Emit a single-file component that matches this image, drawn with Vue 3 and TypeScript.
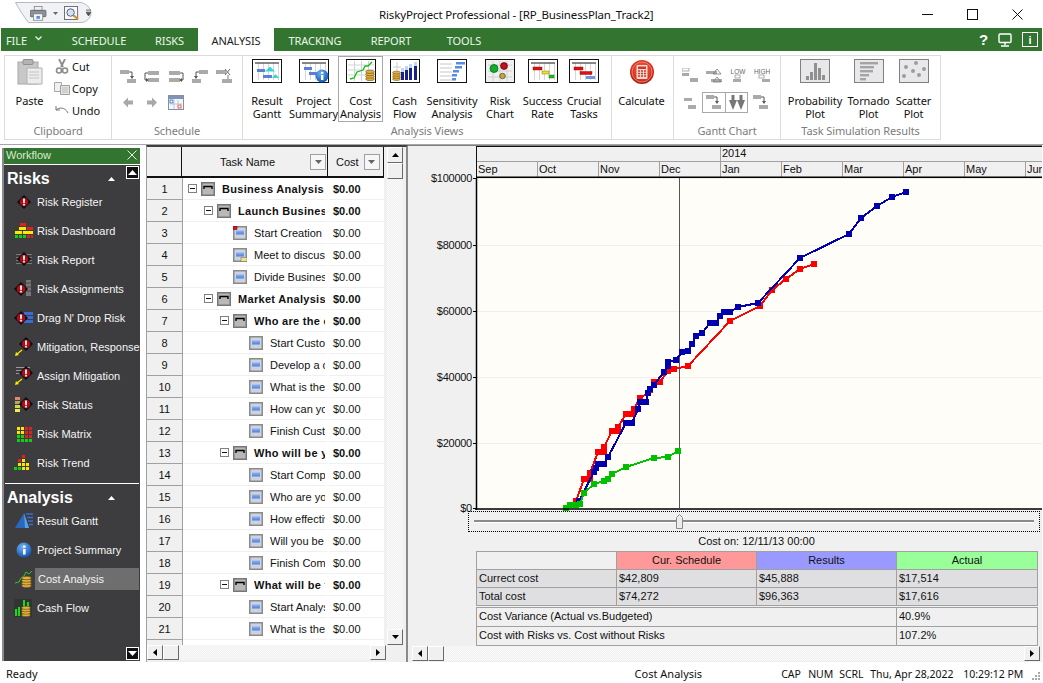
<script setup lang="ts">
type Pt = [number, number]

const tabs = [
  { label: 'SCHEDULE', w: 84 },
  { label: 'RISKS', w: 57 },
  { label: 'ANALYSIS', w: 76, active: true },
  { label: 'TRACKING', w: 82 },
  { label: 'REPORT', w: 70 },
  { label: 'TOOLS', w: 76 },
]

const analysisBtns = [
  { id: 'b-result', l1: 'Result', l2: 'Gantt', w: 46 },
  { id: 'b-summary', l1: 'Project', l2: 'Summary', w: 47 },
  { id: 'b-cost', l1: 'Cost', l2: 'Analysis', w: 45, sel: true },
  { id: 'b-cash', l1: 'Cash', l2: 'Flow', w: 43 },
  { id: 'b-sens', l1: 'Sensitivity', l2: 'Analysis', w: 52 },
  { id: 'b-riskc', l1: 'Risk', l2: 'Chart', w: 44 },
  { id: 'b-success', l1: 'Success', l2: 'Rate', w: 41 },
  { id: 'b-crucial', l1: 'Crucial', l2: 'Tasks', w: 42 },
]

const simBtns = [
  { id: 'b-prob', l1: 'Probability', l2: 'Plot', w: 62 },
  { id: 'b-torn', l1: 'Tornado', l2: 'Plot', w: 45 },
  { id: 'b-scat', l1: 'Scatter', l2: 'Plot', w: 45 },
]

const riskItems = [
  { icon: 'w-register', label: 'Risk Register' },
  { icon: 'w-dash', label: 'Risk Dashboard' },
  { icon: 'w-report', label: 'Risk Report' },
  { icon: 'w-assign', label: 'Risk Assignments' },
  { icon: 'w-drag', label: "Drag N' Drop Risk" },
  { icon: 'w-mitig', label: 'Mitigation, Response' },
  { icon: 'w-amitig', label: 'Assign Mitigation' },
  { icon: 'w-status', label: 'Risk Status' },
  { icon: 'w-matrix', label: 'Risk Matrix' },
  { icon: 'w-trend', label: 'Risk Trend' },
]

const analysisItems = [
  { icon: 'w-gantt', label: 'Result Gantt' },
  { icon: 'w-info', label: 'Project Summary' },
  { icon: 'w-cost', label: 'Cost Analysis', active: true },
  { icon: 'w-cash', label: 'Cash Flow' },
]

// level, summary row?, icon, name
const rows: { lv: number; sum?: boolean; icon?: string; name: string }[] = [
  { lv: 0, sum: true, name: 'Business Analysis' },
  { lv: 1, sum: true, name: 'Launch Business Plan' },
  { lv: 2, icon: 't-red', name: 'Start Creation of Plan' },
  { lv: 2, icon: 't-note', name: 'Meet to discuss the plan' },
  { lv: 2, name: 'Divide Business Plan' },
  { lv: 1, sum: true, name: 'Market Analysis Phase' },
  { lv: 2, sum: true, name: 'Who are the customers' },
  { lv: 3, name: 'Start Customer Study' },
  { lv: 3, name: 'Develop a customer' },
  { lv: 3, name: 'What is the market' },
  { lv: 3, name: 'How can you reach' },
  { lv: 3, name: 'Finish Customer Study' },
  { lv: 2, sum: true, name: 'Who will be your rivals' },
  { lv: 3, name: 'Start Competition' },
  { lv: 3, name: 'Who are your rivals' },
  { lv: 3, name: 'How effective are they' },
  { lv: 3, name: 'Will you be able' },
  { lv: 3, name: 'Finish Competition' },
  { lv: 2, sum: true, name: 'What will be the price' },
  { lv: 3, name: 'Start Analysis' },
  { lv: 3, name: 'What is the price' },
]

const months = ['Sep', 'Oct', 'Nov', 'Dec', 'Jan', 'Feb', 'Mar', 'Apr', 'May', 'Jun']

const yTicks = [
  { y: 178, label: '$100000' },
  { y: 245, label: '$80000' },
  { y: 311, label: '$60000' },
  { y: 377, label: '$40000' },
  { y: 443, label: '$20000' },
  { y: 508, label: '$0' },
]

const red: Pt[] = [[576,501],[584,479],[590,479],[590,473],[598,452],[604,452],[604,447],[612,431],[618,431],[618,427],[626,414],[632,414],[634,409],[640,398],[648,393],[650,390],[654,382],[660,382],[668,371],[674,369],[688,366],[730,321],[760,306],[772,290],[786,279],[800,269],[814,264]]
const blue: Pt[] = [[579,501],[594,472],[596,468],[598,464],[604,464],[608,457],[626,423],[632,423],[638,409],[640,402],[646,402],[648,393],[650,389],[654,385],[664,372],[668,366],[668,362],[676,360],[682,352],[688,351],[692,344],[696,336],[702,333],[710,323],[716,323],[720,316],[724,312],[730,312],[738,307],[758,303],[800,258],[849,234],[861,218],[877,206],[892,197],[906,192]]
const green: Pt[] = [[566,508],[570,505],[576,505],[580,504],[584,493],[594,484],[604,481],[608,479],[612,474],[626,467],[654,458],[668,457],[678,451]]

const series = [
  { color: '#ff0000', pts: red },
  { color: '#0000b0', pts: blue },
  { color: '#00c000', pts: green },
]

function line(pts: Pt[]) {
  return pts.map((p) => p.join(',')).join(' ')
}

const matrixCols = ['#ffe400', '#ffe400', '#e02020', '#e02020']
const matrixCells: { x: number; y: number; c: string }[] = []
for (let r = 0; r < 4; r++) {
  for (let c = 0; c < 4; c++) {
    let col = matrixCols[c]
    if (r === 3 || (r === 2 && c < 2)) col = '#10d010'
    if (r === 1 && c === 0) col = '#ffe400'
    matrixCells.push({ x: 3 + c * 4, y: 3 + r * 4, c: col })
  }
}
const trendCells = [
  [11, 2, '#e02020'], [11, 6, '#ffe400'], [7, 6, '#e02020'], [11, 10, '#ffe400'], [7, 10, '#ffe400'],
  [15, 10, '#ffe400'], [3, 14, '#10d010'], [7, 14, '#10d010'], [11, 14, '#ffe400'], [15, 14, '#ffe400'],
] as [number, number, string][]
</script>

<template>
  <div class="app">
    <svg class="defs" width="0" height="0">
      <defs>
        <linearGradient id="bluebar" x1="0" y1="0" x2="0" y2="1">
          <stop offset="0" stop-color="#8fb4f4" />
          <stop offset="1" stop-color="#4f7fe0" />
        </linearGradient>
        <radialGradient id="redball" cx="0.5" cy="0.4" r="0.6">
          <stop offset="0" stop-color="#f06a50" />
          <stop offset="0.75" stop-color="#d8301c" />
          <stop offset="1" stop-color="#9c1c10" />
        </radialGradient>
        <radialGradient id="blueball" cx="0.4" cy="0.3" r="0.75">
          <stop offset="0" stop-color="#6db2f2" />
          <stop offset="1" stop-color="#1050b0" />
        </radialGradient>

        <!-- coins -->
        <symbol id="coins" viewBox="0 0 10 12">
          <g fill="#e0b040" stroke="#6e5010" stroke-width="0.6">
            <ellipse cx="5" cy="10" rx="4.4" ry="1.6" />
            <ellipse cx="5" cy="7.6" rx="4.4" ry="1.6" />
            <ellipse cx="5" cy="5.2" rx="4.4" ry="1.6" />
            <ellipse cx="5" cy="2.8" rx="4.4" ry="1.6" />
          </g>
        </symbol>

        <!-- large ribbon views -->
        <symbol id="frame" viewBox="0 0 30 24">
          <rect x="0.5" y="0.5" width="29" height="23" fill="#fff" stroke="#111" />
          <path d="M6.5 4v17M11.5 4v17M16.5 4v17M21.5 4v17M26.5 4v17" stroke="#d6d6d6" />
          <path d="M3 4h24" stroke="#555" stroke-width="1.4" />
        </symbol>
        <symbol id="b-result" viewBox="0 0 30 24">
          <use href="#frame" width="30" height="24" />
          <rect x="5" y="10" width="8" height="3" fill="#5a80d8" />
          <rect x="11" y="16" width="9" height="3" fill="#5a80d8" />
          <path d="M13 12.5l5-5 5 5zM20 19l3.5-4 3.5 4z" fill="#35d6d6" />
        </symbol>
        <symbol id="b-summary" viewBox="0 0 30 24">
          <use href="#frame" width="30" height="24" />
          <rect x="5" y="8" width="8" height="3" fill="#5a80d8" />
          <rect x="10" y="13" width="8" height="3" fill="#5a80d8" />
          <circle cx="23" cy="17" r="6.5" fill="url(#blueball)" />
          <rect x="22" y="16" width="2.4" height="5" fill="#fff" />
          <rect x="22" y="12.8" width="2.4" height="2" fill="#fff" />
        </symbol>
        <symbol id="b-cost" viewBox="0 0 30 24">
          <rect x="0.5" y="0.5" width="29" height="23" fill="#fff" stroke="#111" />
          <path d="M2 6h26M2 11h26M2 16h26M8.5 2v20M15.5 2v20M22.5 2v20" stroke="#cfd3d8" />
          <path d="M4 20l4-1 3-6 6-2 2-4 3 0 4-4" fill="none" stroke="#10c010" stroke-width="1.3" />
          <use href="#coins" x="19" y="10" width="10" height="12" />
        </symbol>
        <symbol id="b-cash" viewBox="0 0 30 24">
          <rect x="0.5" y="0.5" width="29" height="23" fill="#fff" stroke="#111" />
          <path d="M3 8h8M3 14h8M7 3v18" stroke="#ccc" />
          <g fill="#bcd8f4">
            <rect x="11" y="9" width="3" height="4" /><rect x="15" y="7" width="3" height="4" /><rect x="19" y="5" width="3" height="4" /><rect x="24" y="3" width="3" height="4" />
          </g>
          <g fill="#18208c">
            <rect x="11" y="13" width="3" height="8" /><rect x="15" y="11" width="3" height="10" /><rect x="19" y="9" width="3" height="12" /><rect x="24" y="7" width="3" height="14" />
          </g>
          <use href="#coins" x="2" y="11" width="9" height="11" />
        </symbol>
        <symbol id="b-sens" viewBox="0 0 30 24">
          <rect x="0.5" y="0.5" width="29" height="23" fill="#fff" stroke="#111" />
          <path d="M3 5h12M3 9h12M3 13h12M3 17h12M3 21h12" stroke="#c8c8c8" />
          <g fill="#5a8be0">
            <rect x="19" y="3" width="9" height="2.5" /><rect x="18" y="7" width="7" height="2.5" />
            <rect x="16" y="11" width="6" height="2.5" /><rect x="15" y="15" width="5" height="2.5" /><rect x="15" y="19" width="4" height="2.5" />
          </g>
        </symbol>
        <symbol id="b-riskc" viewBox="0 0 30 24">
          <rect x="0.5" y="0.5" width="29" height="23" fill="#f0f0ee" stroke="#111" />
          <path d="M3 6h24M3 12h24M3 18h24M8 2v20M15 2v20M22 2v20" stroke="#d0d0d0" />
          <circle cx="9" cy="9.5" r="4" fill="#10b020" stroke="#064" stroke-width="0.8" />
          <circle cx="19" cy="7" r="3.4" fill="#c01020" stroke="#600" stroke-width="0.8" />
          <circle cx="17.5" cy="17" r="2.8" fill="#c0a828" stroke="#555" stroke-width="0.8" />
        </symbol>
        <symbol id="b-success" viewBox="0 0 30 24">
          <use href="#frame" width="30" height="24" />
          <rect x="5" y="8" width="9" height="3" fill="#e01010" stroke="#800" stroke-width="0.4" />
          <rect x="14" y="12" width="7" height="3" fill="#f0e020" stroke="#660" stroke-width="0.4" />
          <rect x="21" y="16" width="5" height="3" fill="#20c020" stroke="#060" stroke-width="0.4" />
        </symbol>
        <symbol id="b-crucial" viewBox="0 0 30 24">
          <use href="#frame" width="30" height="24" />
          <rect x="5" y="8" width="9" height="3" fill="#e01010" stroke="#800" stroke-width="0.4" />
          <rect x="11" y="12.5" width="12" height="3" fill="#e01010" stroke="#800" stroke-width="0.4" />
          <rect x="17" y="17" width="9" height="3" fill="#6a96e4" />
        </symbol>
        <symbol id="b-calc" viewBox="0 0 26 26">
          <circle cx="13" cy="13" r="12" fill="url(#redball)" />
          <circle cx="13" cy="13" r="10" fill="none" stroke="#f09080" stroke-width="0.8" />
          <rect x="7.5" y="6" width="11" height="14" rx="1" fill="#f6d8d0" />
          <rect x="9" y="7.5" width="8" height="2.5" fill="#c83a28" />
          <path d="M9 12h2M12 12h2M15 12h2M9 14.5h2M12 14.5h2M15 14.5h2M9 17h2M12 17h2M15 17h2" stroke="#c83a28" stroke-width="1.5" />
        </symbol>
        <symbol id="b-prob" viewBox="0 0 30 24">
          <rect x="0.5" y="0.5" width="29" height="23" fill="#e8e8ea" stroke="#808080" />
          <g fill="#909090">
            <rect x="6" y="17" width="3" height="4" /><rect x="10" y="13" width="3" height="8" />
            <rect x="14" y="4" width="3" height="17" /><rect x="18" y="9" width="3" height="12" /><rect x="22" y="16" width="3" height="5" />
          </g>
        </symbol>
        <symbol id="b-torn" viewBox="0 0 30 24">
          <rect x="0.5" y="0.5" width="29" height="23" fill="#e8e8ea" stroke="#808080" />
          <g fill="#a4a4a4">
            <rect x="6" y="3" width="18" height="2.4" /><rect x="6" y="7" width="14" height="2.4" />
            <rect x="6" y="11" width="13" height="2.4" /><rect x="6" y="15" width="9" height="2.4" /><rect x="6" y="19" width="6" height="2.4" />
          </g>
        </symbol>
        <symbol id="b-scat" viewBox="0 0 30 24">
          <rect x="0.5" y="0.5" width="29" height="23" fill="#e8e8ea" stroke="#808080" />
          <g fill="#9c9c9c">
            <circle cx="7" cy="8" r="2" /><circle cx="17" cy="4" r="2" /><circle cx="14" cy="12" r="2" />
            <circle cx="25" cy="10" r="2" /><circle cx="20" cy="16" r="2" /><circle cx="5" cy="17" r="2" />
          </g>
        </symbol>

        <!-- small grey ribbon icons -->
        <symbol id="s-l1" viewBox="0 0 16 15">
          <rect x="0" y="1" width="9" height="4" fill="#aaa" /><rect x="7" y="10" width="9" height="4" fill="#aaa" />
          <path d="M9 3h3v4" stroke="#555" fill="none" /><path d="M10 7h4l-2 3z" fill="#555" />
        </symbol>
        <symbol id="s-l2" viewBox="0 0 16 15">
          <rect x="4" y="2" width="11" height="4" fill="#aaa" /><rect x="4" y="9" width="11" height="4" fill="#aaa" />
          <path d="M4 4H1v7h1" stroke="#555" fill="none" /><path d="M2 9l3 2-3 2z" fill="#555" />
        </symbol>
        <symbol id="s-l3" viewBox="0 0 16 15">
          <rect x="1" y="2" width="11" height="4" fill="#aaa" /><rect x="1" y="9" width="11" height="4" fill="#aaa" />
          <path d="M12 4h3v7h-1" stroke="#555" fill="none" /><path d="M14 9l-3 2 3 2z" fill="#555" />
        </symbol>
        <symbol id="s-l4" viewBox="0 0 16 15">
          <rect x="7" y="1" width="9" height="4" fill="#aaa" /><rect x="0" y="10" width="9" height="4" fill="#aaa" />
          <path d="M7 3H4v4" stroke="#555" fill="none" /><path d="M2 7h4l-2 3z" fill="#555" />
        </symbol>
        <symbol id="s-l5" viewBox="0 0 16 15">
          <rect x="0" y="1" width="10" height="4" fill="#aaa" /><rect x="6" y="10" width="10" height="4" fill="#aaa" />
          <path d="M9 0l5 6M14 0L9 6" stroke="#666" /><path d="M12 6v4" stroke="#777" />
        </symbol>
        <symbol id="s-left" viewBox="0 0 16 15"><path d="M3 7.5l5-5v3h5v4H8v3z" fill="#a8a8a8" /></symbol>
        <symbol id="s-right" viewBox="0 0 16 15"><path d="M13 7.5l-5-5v3H3v4h5v3z" fill="#a8a8a8" /></symbol>
        <symbol id="s-cal" viewBox="0 0 16 15">
          <rect x="0.5" y="0.5" width="15" height="14" fill="#f4f6fa" stroke="#8090a8" />
          <rect x="1" y="1" width="14" height="3" fill="#7f93b4" />
          <rect x="2" y="5" width="3" height="3" fill="#fff" stroke="#2860d0" stroke-width="0.8" />
          <rect x="10" y="10" width="3" height="3" fill="#fff" stroke="#e04020" stroke-width="0.8" />
          <path d="M6 5v9M10 5v5M2 9h12" stroke="#b4bccc" stroke-width="0.8" />
        </symbol>
        <symbol id="s-g1" viewBox="0 0 16 15">
          <rect x="0" y="0" width="7" height="3" fill="#fff" stroke="#999" stroke-width="0.8" />
          <rect x="0" y="5" width="7" height="3" fill="#aaa" /><rect x="8" y="10" width="8" height="4" fill="#aaa" />
        </symbol>
        <symbol id="s-g2" viewBox="0 0 16 15">
          <rect x="0" y="3" width="11" height="3" fill="#aaa" /><rect x="5" y="11" width="11" height="3" fill="#aaa" />
          <path d="M7 6l4-5 4 5zM7 14l4-5 4 5z" fill="none" stroke="#777" stroke-width="0.8" />
        </symbol>
        <symbol id="s-g5" viewBox="0 0 16 15">
          <rect x="2" y="3" width="8" height="3" fill="#aaa" /><rect x="6" y="10" width="8" height="4" fill="#aaa" />
        </symbol>
        <symbol id="s-g6" viewBox="0 0 16 15">
          <rect x="0" y="0" width="8" height="4" fill="#aaa" /><rect x="6" y="10" width="9" height="4" fill="#aaa" />
          <path d="M8 2h3v4" stroke="#555" fill="none" /><path d="M9 6h4l-2 3z" fill="#555" />
        </symbol>
        <symbol id="s-arrows" viewBox="0 0 18 15">
          <path d="M1 5l4 10 4-10H6.5V0h-3v5z" fill="#777" /><path d="M9 5l4 10 4-10h-2.5V0h-3v5z" fill="#777" />
        </symbol>

        <!-- workflow icons -->
        <symbol id="diamond" viewBox="0 0 16 16">
          <path d="M8 0l8 8-8 8-8-8z" fill="#0c0c0c" />
          <circle cx="8" cy="8" r="5" fill="#a80e18" />
          <rect x="7" y="4" width="2" height="5" fill="#fff" /><rect x="7" y="10" width="2" height="2" fill="#fff" />
        </symbol>
        <symbol id="w-register" viewBox="0 0 20 20"><use href="#diamond" x="3" y="3" width="14" height="14" /></symbol>
        <symbol id="w-dash" viewBox="0 0 20 20">
          <g fill="#e02020"><rect x="6" y="2" width="6" height="3" /><rect x="13" y="6" width="6" height="3" /><rect x="13" y="14" width="3" height="3" /><rect x="17" y="14" width="2" height="3" /></g>
          <g fill="#ffe800"><rect x="5" y="6" width="7" height="3" /><rect x="1" y="10" width="7" height="3" /><rect x="9" y="10" width="10" height="3" /></g>
          <g fill="#10d010"><rect x="1" y="14" width="3" height="3" /><rect x="5" y="14" width="3" height="3" /><rect x="9" y="14" width="3" height="3" /></g>
        </symbol>
        <symbol id="w-report" viewBox="0 0 20 20">
          <path d="M2 4.500h16M2 7.500h16M2 10.500h16M2 13.500h16" stroke="#777" /><use href="#diamond" x="3" y="2" width="14" height="14" />
        </symbol>
        <symbol id="w-assign" viewBox="0 0 20 20">
          <rect x="12" y="1" width="5" height="16" fill="#777" /><path d="M12 4h5M12 8h5M12 12h5" stroke="#444" />
          <use href="#diamond" x="0" y="3" width="14" height="14" />
        </symbol>
        <symbol id="w-drag" viewBox="0 0 20 20">
          <g fill="#3a6cd8"><rect x="10" y="4" width="9" height="3" /><rect x="11" y="8" width="8" height="3" /><rect x="10" y="12" width="9" height="3" /></g>
          <use href="#diamond" x="0" y="3" width="14" height="14" />
        </symbol>
        <symbol id="w-mitig" viewBox="0 0 20 20">
          <use href="#diamond" x="5" y="0" width="14" height="14" />
          <path d="M8 13l-5 4" stroke="#ffe800" stroke-width="1.3" /><path d="M1 19l1-4 3 3z" fill="#ffe800" />
        </symbol>
        <symbol id="w-amitig" viewBox="0 0 20 20">
          <path d="M2 1.500h14M2 4.500h14M2 7.500h14" stroke="#999" />
          <use href="#diamond" x="5" y="0" width="14" height="14" />
          <path d="M8 13l-5 4" stroke="#ffe800" stroke-width="1.3" /><path d="M1 19l1-4 3 3z" fill="#ffe800" />
        </symbol>
        <symbol id="w-status" viewBox="0 0 20 20">
          <rect x="1" y="2" width="5" height="3" fill="#e08878" /><rect x="1" y="6" width="5" height="3" fill="#c0a060" />
          <rect x="1" y="10" width="5" height="3" fill="#c8d850" /><rect x="1" y="14" width="5" height="3" fill="#f0f040" />
          <use href="#diamond" x="5" y="2" width="14" height="14" />
        </symbol>
        <symbol id="w-matrix" viewBox="0 0 20 20">
          <rect v-for="(c, i) in matrixCells" :key="i" :x="c.x" :y="c.y" width="3" height="3" :fill="c.c" />
        </symbol>
        <symbol id="w-trend" viewBox="0 0 20 20">
          <rect v-for="(c, i) in trendCells" :key="i" :x="c[0] - 3" :y="c[1]" width="3" height="3" :fill="c[2]" />
        </symbol>
        <symbol id="w-gantt" viewBox="0 0 20 20">
          <path d="M1 17l9-15 5 15z" fill="#2868c0" />
          <path d="M10 2l5 15h-4z" fill="#5aa0e8" />
          <path d="M12 3h7M13 6.500h6M14 10h5M15 13.500h4" stroke="#3a70d0" stroke-width="1.6" />
        </symbol>
        <symbol id="w-info" viewBox="0 0 20 20">
          <circle cx="10" cy="10" r="7.500" fill="url(#blueball)" />
          <rect x="9" y="9" width="2.600" height="5.500" fill="#fff" /><rect x="9" y="5.500" width="2.600" height="2.200" fill="#fff" />
        </symbol>
        <symbol id="w-cost" viewBox="0 0 20 20">
          <path d="M1 14l4-1 2-4 3-2 2-4 3 2 3-3" fill="none" stroke="#20d020" />
          <use href="#coins" x="7" y="6" width="11" height="13" />
        </symbol>
        <symbol id="w-cash" viewBox="0 0 20 20">
          <rect x="0" y="1" width="18" height="18" fill="#333" />
          <g fill="#10e010"><rect x="1" y="11" width="2" height="7" /><rect x="4" y="9" width="2" height="9" /><rect x="9" y="2" width="2" height="8" /><rect x="13" y="4" width="2" height="8" /></g>
          <use href="#coins" x="7" y="7" width="10" height="12" />
        </symbol>

        <!-- task icons -->
        <symbol id="t-sum" viewBox="0 0 14 14">
          <rect x="0.750" y="0.750" width="12.500" height="12.500" fill="#b8b8b8" stroke="#777" stroke-width="1.500" />
          <path d="M3 7V4.500h8V7" fill="none" stroke="#000" stroke-width="1.400" />
        </symbol>
        <symbol id="t-plain" viewBox="0 0 14 14">
          <rect x="0.750" y="0.750" width="12.500" height="12.500" fill="#cdd3de" stroke="#8a8a8a" stroke-width="1.500" />
          <rect x="3" y="4.500" width="8" height="4" fill="url(#bluebar)" />
        </symbol>
        <symbol id="t-red" viewBox="0 0 14 14">
          <use href="#t-plain" width="14" height="14" /><rect x="0" y="0" width="4" height="3.500" fill="#e01020" stroke="#500" stroke-width="0.500" />
        </symbol>
        <symbol id="t-note" viewBox="0 0 14 14">
          <use href="#t-plain" width="14" height="14" /><rect x="8" y="9.500" width="6" height="4" fill="#f8e08a" stroke="#666" stroke-width="0.500" />
        </symbol>
      </defs>
    </svg>

    <header class="titlebar">
      <div class="qat">
        <svg class="qat-shape" width="77" height="22" viewBox="0 0 77 22">
          <path d="M0.500 0.500H65C71 1 76 6 76 11C76 16 71 20.500 66 20.500H13.500C9 15 4 7 0.500 0.500z" fill="#f1f2f5" stroke="#b6b9c2" />
        </svg>
        <svg width="17" height="15" viewBox="0 0 24 21" class="qat-ic">
          <rect x="6" y="0.500" width="11" height="6" fill="#eef0f4" stroke="#777" />
          <rect x="0.500" y="6" width="22" height="9" rx="1" fill="#8d939c" stroke="#555" />
          <rect x="5" y="11" width="13" height="9" fill="#f4f6fa" stroke="#777" />
          <rect x="9" y="14" width="5" height="4" fill="#5a8fd8" />
        </svg>
        <svg width="5" height="3" viewBox="0 0 7 4" class="qat-drop"><path d="M0 0h7L3.500 4z" fill="#666" /></svg>
        <svg width="16" height="14" viewBox="0 0 17 15" class="qat-ic">
          <rect x="0.500" y="0.500" width="14" height="14" fill="#fafafa" stroke="#667" />
          <circle cx="7" cy="7" r="4" fill="#cfe2f6" stroke="#557" />
          <path d="M10 10l5 4" stroke="#e09020" stroke-width="2.400" />
        </svg>
        <svg width="5" height="8" viewBox="0 0 6 9" class="qat-ic qat-more"><path d="M0 1h6M0 3.500h6L3 8z" stroke="#555" fill="#555" /></svg>
      </div>
      <div class="title">RiskyProject Professional - [RP_BusinessPlan_Track2]</div>
      <div class="winbtns">
        <span class="winbtn"><svg width="11" height="11" viewBox="0 0 11 11"><path d="M0 5.500h11" stroke="#111" /></svg></span>
        <span class="winbtn"><svg width="11" height="11" viewBox="0 0 11 11"><rect x="0.500" y="0.500" width="10" height="10" fill="none" stroke="#111" /></svg></span>
        <span class="winbtn"><svg width="11" height="11" viewBox="0 0 11 11"><path d="M0.500 0.500l10 10M10.500 0.500l-10 10" stroke="#111" /></svg></span>
      </div>
    </header>

    <nav class="tabs">
      <div class="tab file">FILE<svg width="7" height="5" viewBox="0 0 7 5"><path d="M0.500 0.500L3.500 3.500 6.500 0.500" fill="none" stroke="#e8f0e8" stroke-width="1.300" /></svg></div>
      <div
        v-for="t in tabs"
        :key="t.label"
        class="tab"
        :class="{ active: t.active }"
        :style="{ width: t.w + 'px' }"
      >{{ t.label }}</div>
      <div class="tab-tools">
        <span class="help">?</span>
        <svg width="14" height="14" viewBox="0 0 14 14"><rect x="1" y="1" width="12" height="8.500" rx="1" fill="none" stroke="#fff" stroke-width="1.400" /><path d="M7 10v2M3 13h8" stroke="#fff" stroke-width="1.400" /></svg>
        <span class="infobox">i</span>
      </div>
    </nav>

    <section class="ribbon">
      <div class="groups">
        <div class="group clip">
          <div class="group-body clip-body">
            <div class="paste">
              <svg width="26" height="26" viewBox="0 0 26 26">
                <rect x="1" y="3" width="20" height="22" fill="#c8c8c8" stroke="#a8a8a8" />
                <rect x="6" y="0.500" width="10" height="5" rx="1" fill="#b4b4b4" stroke="#909090" />
                <path d="M10 9h15v16H10z" fill="#ececec" stroke="#b0b0b0" />
                <path d="M12 13h10M12 16h10M12 19h10" stroke="#c4c4c4" />
              </svg>
              <span class="rb-label">Paste</span>
            </div>
            <div class="clip-col">
              <div class="clip-row">
                <svg width="14" height="15" viewBox="0 0 14 15"><path d="M4 0l4 8M10 0L6 8" stroke="#8c8c8c" stroke-width="1.800" /><circle cx="4" cy="11.500" r="2.500" fill="none" stroke="#8c8c8c" stroke-width="1.600" /><circle cx="10" cy="11.500" r="2.500" fill="none" stroke="#8c8c8c" stroke-width="1.600" /></svg>
                <span>Cut</span>
              </div>
              <div class="clip-row">
                <svg width="16" height="13" viewBox="0 0 16 13"><path d="M0.500 0.500h7v9h-7z" fill="#f0f0f0" stroke="#a8a8a8" /><path d="M6.500 3.500h9v9h-9z" fill="#e6e6e6" stroke="#a0a0a0" /><path d="M8 6h6M8 8h6M8 10h6" stroke="#bbb" /></svg>
                <span>Copy</span>
              </div>
              <div class="clip-row">
                <svg width="14" height="10" viewBox="0 0 14 10"><path d="M1 1v4h4" fill="none" stroke="#777" /><path d="M1 5c3-3 9-3 12 3" fill="none" stroke="#777" /></svg>
                <span>Undo</span>
              </div>
            </div>
          </div>
          <div class="group-label">Clipboard</div>
        </div>

        <div class="group sched">
          <div class="group-body icon-rows sched-body">
            <div class="icon-row">
              <svg v-for="i in ['s-l1','s-l2','s-l3','s-l4','s-l5']" :key="i" class="s16"><use :href="'#' + i" width="16" height="15" /></svg>
            </div>
            <div class="icon-row">
              <svg v-for="i in ['s-left','s-right','s-cal']" :key="i" class="s16"><use :href="'#' + i" width="16" height="15" /></svg>
            </div>
          </div>
          <div class="group-label">Schedule</div>
        </div>

        <div class="group views">
          <div class="group-body big-row">
            <div
              v-for="b in analysisBtns"
              :key="b.id"
              class="big-btn"
              :class="{ selected: b.sel }"
              :style="{ width: b.w + 'px' }"
            >
              <svg class="big-icon"><use :href="'#' + b.id" width="30" height="24" /></svg>
              <span class="rb-label">{{ b.l1 }}</span>
              <span class="rb-label">{{ b.l2 }}</span>
            </div>
          </div>
          <div class="group-label">Analysis Views</div>
        </div>

        <div class="group calc">
          <div class="group-body big-row">
            <div class="big-btn calc-btn">
              <svg class="calc-icon"><use href="#b-calc" width="26" height="26" /></svg>
              <span class="rb-label">Calculate</span>
            </div>
          </div>
        </div>

        <div class="group ganttg">
          <div class="group-body icon-rows gantt-body">
            <div class="icon-row">
              <svg class="s16"><use href="#s-g1" width="16" height="15" /></svg>
              <svg class="s16"><use href="#s-g2" width="16" height="15" /></svg>
              <svg class="s16" viewBox="0 0 16 15">
                <text x="8" y="5.500" class="tiny">LOW</text>
                <rect x="5" y="7" width="5" height="3" fill="#fff" stroke="#999" stroke-width="0.800" /><rect x="3" y="11" width="8" height="3" fill="#aaa" />
              </svg>
              <svg class="s16" viewBox="0 0 16 15">
                <text x="8" y="5.500" class="tiny">HIGH</text>
                <rect x="5" y="7" width="5" height="3" fill="#fff" stroke="#999" stroke-width="0.800" /><rect x="8" y="11" width="8" height="3" fill="#aaa" />
              </svg>
            </div>
            <div class="icon-row toggles">
              <svg class="s16"><use href="#s-g5" width="16" height="15" /></svg>
              <span class="toggle first"><svg class="s16"><use href="#s-g6" width="16" height="15" /></svg></span>
              <span class="toggle"><svg width="18" height="15"><use href="#s-arrows" width="18" height="15" /></svg></span>
              <svg class="s16"><use href="#s-g6" width="16" height="15" /></svg>
            </div>
          </div>
          <div class="group-label">Gantt Chart</div>
        </div>

        <div class="group sim">
          <div class="group-body big-row sim-row">
            <div v-for="b in simBtns" :key="b.id" class="big-btn" :style="{ width: b.w + 'px' }">
              <svg class="big-icon"><use :href="'#' + b.id" width="30" height="24" /></svg>
              <span class="rb-label">{{ b.l1 }}</span>
              <span class="rb-label">{{ b.l2 }}</span>
            </div>
          </div>
          <div class="group-label">Task Simulation Results</div>
        </div>
      </div>
    </section>

    <main class="main">
      <aside class="workflow">
        <div class="wf-head">
          <span>Workflow</span>
          <svg width="10" height="10" viewBox="0 0 10 10"><path d="M0.500 0.500l9 9M9.500 0.500l-9 9" stroke="#e8f0e8" /></svg>
        </div>
        <div class="wf-scroll up"><svg width="9" height="5" viewBox="0 0 9 5"><path d="M0 5L4.500 0 9 5z" fill="#fff" /></svg></div>
        <div class="wf-section">
          <span>Risks</span>
          <svg width="7" height="4" viewBox="0 0 7 4"><path d="M0 4L3.500 0 7 4z" fill="#fff" /></svg>
        </div>
        <div v-for="it in riskItems" :key="it.label" class="wf-item">
          <svg class="wf-icon"><use :href="'#' + it.icon" width="20" height="20" /></svg>
          <span class="wf-text">{{ it.label }}</span>
        </div>
        <div class="wf-rule"></div>
        <div class="wf-section">
          <span>Analysis</span>
          <svg width="7" height="4" viewBox="0 0 7 4"><path d="M0 4L3.500 0 7 4z" fill="#fff" /></svg>
        </div>
        <div v-for="it in analysisItems" :key="it.label" class="wf-item" :class="{ active: it.active }">
          <svg class="wf-icon"><use :href="'#' + it.icon" width="20" height="20" /></svg>
          <span class="wf-text">{{ it.label }}</span>
        </div>
        <div class="wf-scroll down"><svg width="9" height="5" viewBox="0 0 9 5"><path d="M0 0L4.500 5 9 0z" fill="#fff" /></svg></div>
      </aside>

      <section class="taskgrid">
        <div class="grid-top">
          <div class="grid">
            <div class="g-head">
              <div class="gh corner"></div>
              <div class="gh name-h">
                <span>Task Name</span>
                <span class="filter"><svg width="7" height="4" viewBox="0 0 7 4"><path d="M0 0h7L3.500 4z" fill="#666" /></svg></span>
              </div>
              <div class="gh cost-h">
                <span>Cost</span>
                <span class="filter"><svg width="7" height="4" viewBox="0 0 7 4"><path d="M0 0h7L3.500 4z" fill="#666" /></svg></span>
              </div>
            </div>
            <div v-for="(r, i) in rows" :key="i" class="g-row" :class="{ sum: r.sum }">
              <div class="g-num">{{ i + 1 }}</div>
              <div class="g-name" :style="{ paddingLeft: 5 + r.lv * 16 + 'px' }">
                <span class="exp-slot"><span v-if="r.sum" class="expander"></span></span>
                <svg class="t-icon"><use :href="'#' + (r.sum ? 't-sum' : r.icon || 't-plain')" width="14" height="14" /></svg>
                <span class="g-text">{{ r.name }}</span>
              </div>
              <div class="g-cost">$0.00</div>
            </div>
            <div class="g-row blank"><div class="g-num"></div></div>
          </div>
          <div class="vscroll">
            <span class="sbtn"><svg width="7" height="4" viewBox="0 0 7 4"><path d="M0 4L3.500 0 7 4z" fill="#000" /></svg></span>
            <span class="sbtn"></span>
            <span class="strack"></span>
            <span class="sbtn"><svg width="7" height="4" viewBox="0 0 7 4"><path d="M0 0h7L3.500 4z" fill="#000" /></svg></span>
          </div>
        </div>
        <div class="hscroll small">
          <span class="sbtn"><svg width="4" height="7" viewBox="0 0 4 7"><path d="M4 0v7L0 3.500z" fill="#000" /></svg></span>
          <span class="sbtn"></span>
          <span class="strack"></span>
          <span class="sbtn"><svg width="4" height="7" viewBox="0 0 4 7"><path d="M0 0v7l4-3.500z" fill="#000" /></svg></span>
        </div>
      </section>

      <section class="chartpane">
        <div class="timeline">
          <div class="tl-years">
            <span class="tl-year blank"></span>
            <span class="tl-year">2014</span>
          </div>
          <div class="tl-months">
            <span v-for="m in months" :key="m" class="tl-month">{{ m }}</span>
          </div>
        </div>
        <svg class="plot" width="632" height="332" viewBox="410 178 632 332">
          <rect x="477" y="178" width="565" height="330" fill="#fffdf7" />
          <path
            v-for="t in yTicks.slice(0, 5)"
            :key="t.y"
            :d="`M477 ${t.y + 0.5}H1042`"
            stroke="#f1efe9"
          />
          <path d="M679.500 178V508" stroke="#555" />
          <g v-for="s in series" :key="s.color" class="series">
            <polyline :points="line(s.pts)" fill="none" :stroke="s.color" stroke-width="2" />
            <rect
              v-for="(p, i) in s.pts"
              :key="i"
              :x="p[0] - 3"
              :y="p[1] - 3"
              width="6"
              height="6"
              :fill="s.color"
            />
          </g>
          <path d="M476.500 178V510M475 509H1042M476 177.200H1042" stroke="#000" stroke-width="1.500" fill="none" />
          <g v-for="t in yTicks" :key="t.label">
            <text :x="472" :y="t.y + 4" class="ylab">{{ t.label }}</text>
            <path :d="`M473 ${t.y + 0.5}h3`" stroke="#000" />
          </g>
        </svg>
        <div class="slider">
          <div class="slider-track"></div>
          <svg class="slider-thumb" width="7" height="15" viewBox="0 0 7 15">
            <path d="M0.500 14.500V3.500l3-3 3 3v11z" fill="#ececec" stroke="#8a8a8a" />
          </svg>
        </div>
        <div class="cost-on">Cost on: 12/11/13 00:00</div>
        <div class="sum-table top">
          <div class="c head"></div>
          <div class="c head red">Cur. Schedule</div>
          <div class="c head blue">Results</div>
          <div class="c head green">Actual</div>
          <div class="c shade">Currect cost</div>
          <div class="c shade">$42,809</div>
          <div class="c shade">$45,888</div>
          <div class="c shade">$17,514</div>
          <div class="c shade">Total cost</div>
          <div class="c shade">$74,272</div>
          <div class="c shade">$96,363</div>
          <div class="c shade">$17,616</div>
        </div>
        <div class="sum-table bottom">
          <div class="c wide">Cost Variance (Actual vs.Budgeted)</div>
          <div class="c">40.9%</div>
          <div class="c wide">Cost with Risks vs. Cost without Risks</div>
          <div class="c">107.2%</div>
        </div>
        <div class="hscroll big">
          <span class="sbtn"><svg width="4" height="7" viewBox="0 0 4 7"><path d="M4 0v7L0 3.500z" fill="#000" /></svg></span>
          <span class="sbtn"></span>
          <span class="strack"></span>
          <span class="sbtn"><svg width="4" height="7" viewBox="0 0 4 7"><path d="M0 0v7l4-3.500z" fill="#000" /></svg></span>
        </div>
      </section>
    </main>

    <footer class="statusbar">
      <span class="st-ready">Ready</span>
      <span class="st-view">Cost Analysis</span>
      <span class="st-cell cap">CAP</span>
      <span class="st-cell num">NUM</span>
      <span class="st-cell num">SCRL</span>
      <span class="st-cell date">Thu, Apr 28,2022</span>
      <span class="st-cell">10:29:12 PM</span>
      <svg class="grip" width="11" height="11" viewBox="0 0 11 11"><path d="M8 1h2v2H8zM5 4h2v2H5zM8 4h2v2H8zM2 7h2v2H2zM5 7h2v2H5zM8 7h2v2H8z" fill="#a8a8a8" /></svg>
    </footer>
  </div>
</template>

<style>
html,
body {
  margin: 0;
  background: #fff;
  overflow: hidden;
}
</style>

<style scoped>
.app {
  width: 1043px;
  height: 683px;
  display: flex;
  flex-direction: column;
  font-family: "Liberation Sans", Arial, sans-serif;
  font-size: 11px;
  color: #111;
  background: #fff;
  overflow: hidden;
}

.defs {
  position: absolute;
}

/* title bar */
.titlebar {
  height: 28px;
  flex: none;
  display: flex;
  align-items: center;
  font-family: "Noto Sans", sans-serif;
  font-size: 11.500px;
  letter-spacing: -0.150px;
}

.qat {
  position: relative;
  width: 76px;
  height: 21px;
  margin: 0 0 4px 15px;
  box-sizing: border-box;
  display: flex;
  align-items: center;
  padding: 2px 0 0 15px;
}

.qat-shape {
  position: absolute;
  left: 0;
  top: 0;
}

.qat-ic,
.qat-drop {
  position: relative;
  flex: none;
}

.qat-drop {
  margin: 0 6px 0 6px;
}

.qat-more {
  margin-left: 6px;
}

.title {
  margin-left: 288px;
  width: 276px;
  white-space: nowrap;
}

.winbtns {
  margin-left: auto;
  margin-right: 3px;
  display: flex;
}

.winbtn {
  width: 45px;
  height: 28px;
  display: flex;
  align-items: center;
  justify-content: center;
}

/* tabs */
.tabs {
  height: 23px;
  flex: none;
  margin: 0 1px;
  display: flex;
  background: #337530;
  color: #eef5ec;
  font-family: "Noto Sans", sans-serif;
  font-size: 11px;
  letter-spacing: -0.100px;
}

.tab {
  display: flex;
  align-items: center;
  justify-content: center;
  white-space: nowrap;
  padding-top: 2px;
  box-sizing: border-box;
}

.tab.file {
  width: 56px;
  padding-left: 5px;
  justify-content: flex-start;
  gap: 8px;
}

.tab.file svg {
  margin-top: -4px;
}

.tab.active {
  background: #fff;
  color: #1c1c1c;
}

.tab-tools {
  margin-left: auto;
  margin-right: 4px;
  display: flex;
  align-items: center;
  gap: 10px;
  color: #fff;
}

.help {
  font-family: "Liberation Sans", sans-serif;
  font-weight: 700;
  font-size: 15px;
}

.infobox {
  width: 14px;
  height: 13px;
  border: 1px solid #fff;
  display: flex;
  align-items: center;
  justify-content: center;
  font-family: "Liberation Sans", sans-serif;
  font-weight: 700;
  font-size: 11px;
}

/* ribbon */
.ribbon {
  height: 94px;
  flex: none;
  box-sizing: border-box;
  padding: 4px 0 0 4px;
  border-bottom: 1px solid #a6a6a6;
  font-family: "Noto Sans", sans-serif;
}

.groups {
  display: flex;
  height: 85px;
  width: 937px;
  box-sizing: border-box;
  border: 1px solid #dcdcdc;
}

.group {
  display: flex;
  flex-direction: column;
  box-sizing: border-box;
  border-right: 1px solid #dcdcdc;
}

.group:last-child {
  border-right: none;
}

.group-body {
  flex: 1;
  min-height: 0;
}

.group-label {
  height: 17px;
  text-align: center;
  color: #7c7c7c;
  font-size: 11px;
  line-height: 17px;
  letter-spacing: -0.100px;
  white-space: nowrap;
}

.clip {
  width: 107px;
}

.sched {
  width: 131px;
}

.views {
  width: 369px;
}

.calc {
  width: 62px;
}

.ganttg {
  width: 107px;
}

.sim {
  flex: 1;
}

.rb-label {
  font-size: 11px;
  line-height: 13px;
  letter-spacing: -0.100px;
  white-space: nowrap;
  color: #111;
}

.clip-body {
  display: flex;
}

.paste {
  width: 49px;
  display: flex;
  flex-direction: column;
  align-items: center;
  padding-top: 3px;
}

.paste .rb-label {
  margin-top: 9px;
}

.clip-col {
  display: flex;
  flex-direction: column;
  margin-top: -1px;
  font-size: 11px;
}

.clip-row {
  height: 22px;
  display: flex;
  align-items: center;
  gap: 2px;
}

.clip-row svg {
  width: 16px;
}

.icon-rows {
  display: flex;
  flex-direction: column;
}

.icon-row {
  display: flex;
  gap: 8px;
  align-items: center;
}

.s16 {
  width: 16px;
  height: 15px;
  display: block;
}

.sched-body {
  padding: 13px 0 0 8px;
  gap: 11px;
}

.gantt-body {
  padding: 12px 0 0 8px;
  gap: 9px;
}

.toggles {
  gap: 4px;
}

.toggle {
  width: 23px;
  height: 21px;
  box-sizing: border-box;
  border: 1px solid #a8a8a8;
  display: flex;
  align-items: center;
  justify-content: center;
}

.toggle.first {
  border-right: none;
  margin-right: -4px;
}

.toggle:not(.first) {
  margin-right: 1px;
}

.big-row {
  display: flex;
  padding-left: 1px;
}

.sim-row {
  padding-left: 3px;
}

.big-btn {
  box-sizing: border-box;
  height: 66px;
  display: flex;
  flex-direction: column;
  align-items: center;
  border: 1px solid transparent;
}

.big-btn.selected {
  border-color: #a8a8a8;
  margin-left: 1px;
}

.big-icon {
  width: 30px;
  height: 24px;
  margin: 2px 0 11px;
  flex: none;
}

.calc-btn {
  width: 57px;
}

.calc-icon {
  width: 26px;
  height: 26px;
  margin: 2px 0 9px;
  flex: none;
}

.tiny {
  font-family: "Liberation Sans", sans-serif;
  font-size: 6.500px;
  text-anchor: middle;
  fill: #666;
}

/* main */
.main {
  flex: 1;
  min-height: 0;
  display: flex;
}

.workflow {
  width: 136px;
  margin: 3px 6px 1px 2px;
  position: relative;
  background: #3d3d3f;
  border-left: 2px solid #8a8a8a;
  color: #f4f4f4;
  flex: none;
  display: flex;
  flex-direction: column;
}

.wf-head {
  height: 17px;
  flex: none;
  box-sizing: border-box;
  background: #337530;
  border-bottom: 1px solid #fff;
  display: flex;
  align-items: center;
  justify-content: space-between;
  padding: 0 3px 2px 2px;
  color: #d6ecce;
  font-size: 11px;
}

.wf-scroll {
  position: absolute;
  right: 1px;
  width: 13px;
  height: 13px;
  box-sizing: border-box;
  border: 1px solid #fff;
  background: #111;
  display: flex;
  align-items: center;
  justify-content: center;
}

.wf-scroll.up {
  top: 18px;
}

.wf-scroll.down {
  bottom: 1px;
}

.wf-section {
  height: 22px;
  flex: none;
  box-sizing: border-box;
  padding: 6px 0 0 3px;
  display: flex;
  align-items: center;
  font-size: 16px;
  font-weight: 700;
  color: #fff;
}

.wf-section svg {
  margin-left: auto;
  margin-right: 25px;
}

.wf-item {
  height: 29px;
  flex: none;
  display: flex;
  align-items: center;
  padding-left: 10px;
  font-size: 11px;
  white-space: nowrap;
}

.wf-icon {
  width: 20px;
  height: 20px;
  flex: none;
  margin-right: 3px;
}

.wf-text {
  line-height: 22px;
}

.wf-item.active .wf-text {
  flex: 1;
  background: #6e6e6e;
  margin-left: -2px;
  padding-left: 3px;
  margin-right: 1px;
}

.wf-rule {
  height: 1px;
  flex: none;
  background: #fff;
  margin: 6px 1px 0 1px;
}

/* task grid */
.taskgrid {
  width: 262px;
  flex: none;
  display: flex;
  flex-direction: column;
  box-sizing: border-box;
  background: #f0f0f0;
  border-top: 2px solid #404040;
  border-right: 2px solid #8a8a8a;
  border-left: 1px solid #a0a0a0;
}

.grid-top {
  flex: 1;
  min-height: 0;
  display: flex;
}

.grid {
  width: 237px;
  background: #fff;
  overflow: hidden;
  flex: none;
}

.g-head {
  height: 31px;
  display: grid;
  grid-template-columns: 35px 146px 56px;
  background: #f0f0f0;
  border-bottom: 2px solid #111;
  box-sizing: border-box;
}

.gh {
  box-sizing: border-box;
  border-right: 1px solid #111;
  display: flex;
  align-items: center;
}

.name-h {
  padding-left: 38px;
  gap: 35px;
}

.cost-h {
  padding-left: 8px;
  gap: 5px;
}

.filter {
  width: 16px;
  height: 16px;
  box-sizing: border-box;
  border: 1px solid #a0a0a0;
  background: #f6f6f6;
  display: flex;
  align-items: center;
  justify-content: center;
}

.g-row {
  height: 22px;
  display: grid;
  grid-template-columns: 36px 146px 55px;
  box-sizing: border-box;
  align-items: stretch;
}

.g-num {
  background: #f0f0f0;
  border-bottom: 1px solid #a0a0a0;
  border-right: 1px solid #a0a0a0;
  display: flex;
  align-items: center;
  justify-content: center;
  box-sizing: border-box;
  font-weight: 400;
}

.g-name {
  display: flex;
  align-items: center;
  overflow: hidden;
  white-space: nowrap;
  box-sizing: border-box;
  border-bottom: 1px solid #f0f0f0;
  border-right: 4px solid #fff;
}

.exp-slot {
  width: 13px;
  flex: none;
}

.expander {
  display: block;
  width: 9px;
  height: 9px;
  box-sizing: border-box;
  border: 1px solid #808080;
  background: linear-gradient(#111, #111) center / 5px 1px no-repeat #fff;
}

.t-icon {
  width: 14px;
  height: 14px;
  flex: none;
  margin-right: 7px;
}

.g-text {
  flex: none;
}

.g-cost {
  padding-left: 4px;
  display: flex;
  align-items: center;
  border-bottom: 1px solid #f0f0f0;
  box-sizing: border-box;
}

.g-row.sum {
  font-weight: 700;
}

.g-row.sum .g-text {
  letter-spacing: 0.300px;
}

.vscroll {
  width: 16px;
  margin-left: 3px;
  display: flex;
  flex-direction: column;
}

.sbtn {
  flex: none;
  box-sizing: border-box;
  width: 16px;
  height: 16px;
  background: #f0f0f0;
  border: 1px solid;
  border-color: #fff #696969 #696969 #fff;
  display: flex;
  align-items: center;
  justify-content: center;
}

.strack {
  flex: 1;
  background: repeating-conic-gradient(#f0f0f0 0 25%, #fafafa 0 50%) 0 0 / 2px 2px;
}

.hscroll {
  height: 15px;
  flex: none;
  display: flex;
}

.hscroll .sbtn {
  height: 15px;
}

.hscroll.small {
  width: 239px;
  margin-bottom: 2px;
}

/* chart pane */
.chartpane {
  flex: 1;
  min-width: 0;
  background: #f0f0f0;
  display: flex;
  flex-direction: column;
  border-top: 1px solid #808080;
  margin-right: 1px;
  padding-left: 2px;
  position: relative;
}

.timeline {
  margin-left: 66px;
  overflow: hidden;
  white-space: nowrap;
  height: 32px;
  flex: none;
  box-sizing: border-box;
  border-top: 1px solid #111;
  border-left: 1px solid #111;
}

.tl-years {
  height: 15px;
  display: flex;
  border-bottom: 1px solid #a0a0a0;
  box-sizing: border-box;
}

.tl-year {
  padding-left: 1px;
  border-left: 1px solid #a0a0a0;
  line-height: 12px;
}

.tl-year.blank {
  width: 243px;
  box-sizing: border-box;
  border-left: none;
}

.tl-months {
  height: 15px;
  display: flex;
}

.tl-month {
  width: 61px;
  flex: none;
  box-sizing: border-box;
  padding-left: 1px;
  line-height: 15px;
  border-right: 1px solid #a0a0a0;
}

.plot {
  display: block;
  flex: none;
  overflow: visible;
}

.series polyline,
.series rect {
  shape-rendering: crispEdges;
}

.ylab {
  font-family: "Liberation Sans", sans-serif;
  font-size: 11px;
  letter-spacing: -0.250px;
  text-anchor: end;
  fill: #111;
}

.slider {
  position: relative;
  margin: 1px 0 0 58px;
  width: 572px;
  height: 21px;
  box-sizing: border-box;
  border: 1px dotted #000;
  flex: none;
  display: flex;
  align-items: center;
  padding: 0 5px;
}

.slider-track {
  flex: 1;
  height: 3px;
  box-sizing: border-box;
  background: #8a8a8a;
  border-bottom: 1px solid #fff;
}

.slider-thumb {
  position: absolute;
  left: 207px;
  top: 2px;
}

.cost-on {
  height: 19px;
  flex: none;
  line-height: 18px;
  text-align: center;
  margin-left: 66px;
  width: 561px;
}

.sum-table {
  margin-left: 66px;
  width: 562px;
  flex: none;
  display: grid;
  box-sizing: border-box;
  border-top: 1px solid #a0a0a0;
  border-left: 1px solid #a0a0a0;
}

.sum-table.top {
  grid-template-columns: 140px 140px 140px 141px;
  grid-auto-rows: 18px;
}

.sum-table.bottom {
  margin-top: 1px;
  grid-template-columns: 420px 141px;
  grid-auto-rows: 19px;
}

.c {
  box-sizing: border-box;
  border-right: 1px solid #a0a0a0;
  border-bottom: 1px solid #a0a0a0;
  padding: 0 0 2px 2px;
  display: flex;
  align-items: center;
}

.c.head {
  justify-content: center;
  padding-left: 0;
}

.c.shade {
  background: #dfdfe1;
}

.c.red {
  background: #ff9999;
}

.c.blue {
  background: #9999ff;
}

.c.green {
  background: #99ff99;
}

.hscroll.big {
  margin-top: auto;
  margin-bottom: 2px;
  margin-left: 2px;
  width: 628px;
}

/* status bar */
.statusbar {
  height: 21px;
  flex: none;
  display: flex;
  align-items: center;
  box-sizing: border-box;
  padding: 2px 0 0 6px;
  font-family: "Noto Sans", sans-serif;
  font-size: 11px;
  white-space: nowrap;
}

.st-view {
  margin-left: 597px;
  margin-right: 79px;
}

.st-cell {
  font-size: 10.500px;
}

.st-cell.cap {
  width: 27px;
}

.st-cell.num {
  width: 31px;
}

.st-cell.date {
  width: 93px;
}

.grip {
  position: absolute;
  right: 2px;
  bottom: 1px;
}
</style>
